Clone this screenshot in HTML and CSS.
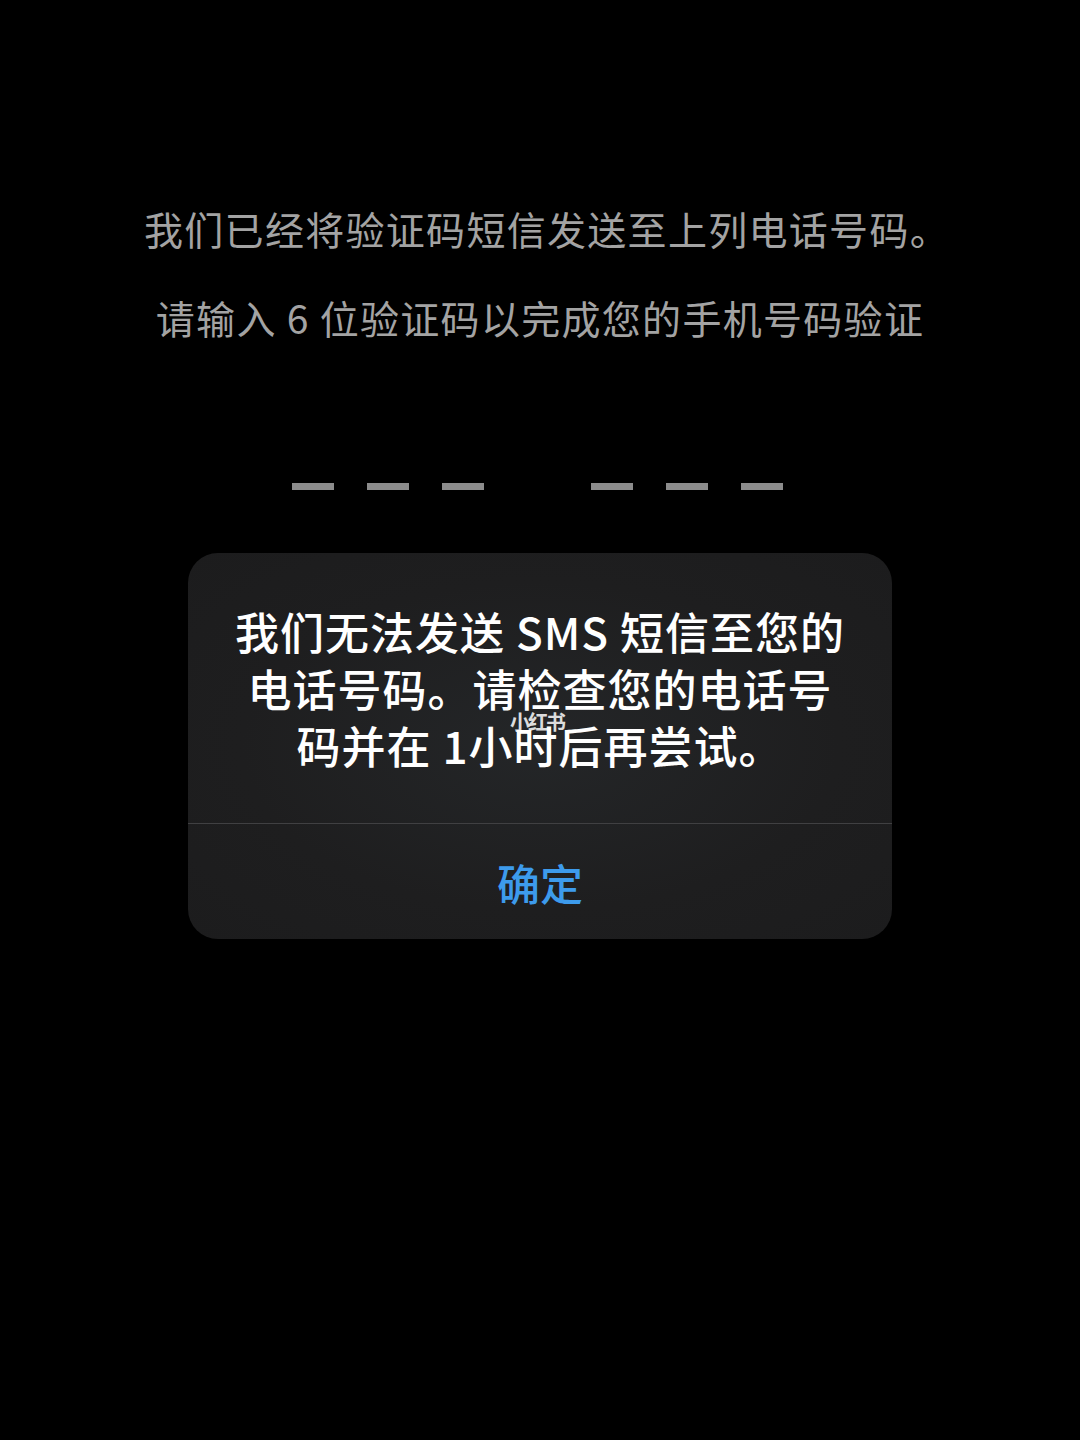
FILE: index.html
```html
<!DOCTYPE html>
<html lang="zh-CN">
<head>
<meta charset="utf-8">
<title>验证码</title>
<link rel="stylesheet" href="styles.css">
</head>
<body>
<main class="screen">
  <section class="info">
    <p class="info-line first">我们已经将验证码短信发送至上列电话号码。</p>
    <p class="info-line second">请输入 6 位验证码以完成您的手机号码验证</p>
  </section>
  <div class="code">
    <div class="code-group">
      <span class="dash"></span><span class="dash"></span><span class="dash"></span>
    </div>
    <div class="code-group">
      <span class="dash"></span><span class="dash"></span><span class="dash"></span>
    </div>
  </div>
  <div class="alert">
    <div class="alert-body">
      <p class="alert-msg">我们无法发送 SMS 短信至您的<br>电话号码。请检查您的电话号<br>码并在 1小时后再尝试。</p>
      <span class="watermark">小红书</span>
    </div>
    <div class="alert-action">确定</div>
  </div>
</main>
</body>
</html>
```

FILE: styles.css
```css
html, body {
  margin: 0;
  padding: 0;
  background: #000;
}
body {
  width: 1080px;
  height: 1440px;
  font-family: "Noto Sans CJK SC", "Noto Sans", sans-serif;
  overflow: hidden;
}
.screen {
  display: flex;
  flex-direction: column;
  align-items: center;
  padding-top: 203px;
}
.info {
  display: flex;
  flex-direction: column;
  align-items: center;
}
.info-line {
  margin: 0;
  font-size: 39px;
  line-height: 50px;
  color: #a3a3a3;
  letter-spacing: 1.3px;
  white-space: nowrap;
}
.info-line.first {
  padding-left: 14px;
}
.info-line.second {
  margin-top: 39px;
}
.code {
  display: flex;
  gap: 107px;
  margin-top: 141px;
  padding-right: 6px;
}
.code-group {
  display: flex;
  gap: 33px;
}
.dash {
  display: block;
  width: 42px;
  height: 7px;
  background: #8c8c8c;
}
.alert {
  margin-top: 63px;
  width: 704px;
  border-radius: 30px;
  background: radial-gradient(ellipse at 50% 50%, #242628 0%, #1e1e1f 60%, #1c1c1d 100%);
  overflow: hidden;
}
.alert-body {
  position: relative;
  padding: 50px 10px 49px;
  border-bottom: 1px solid #404042;
  text-align: center;
}
.alert-msg {
  margin: 0;
  font-size: 44px;
  line-height: 57px;
  font-weight: 500;
  letter-spacing: 1px;
  color: #fff;
  white-space: nowrap;
}
.watermark {
  position: absolute;
  left: 322px;
  top: 154px;
  font-size: 20px;
  font-weight: 700;
  color: rgba(255, 255, 255, 0.85);
  letter-spacing: -2px;
}
.alert-action {
  height: 115px;
  display: flex;
  align-items: center;
  justify-content: center;
  font-size: 43px;
  font-weight: 500;
  color: #3d9bec;
}
```
